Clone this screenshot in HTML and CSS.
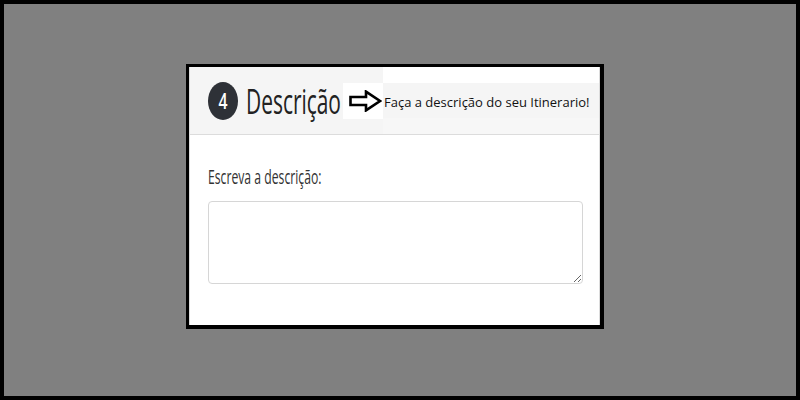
FILE: index.html
```html
<!DOCTYPE html>
<html lang="pt">
<head>
<meta charset="utf-8">
<title>Descrição</title>
<link rel="stylesheet" href="styles.css">
</head>
<body>
<div class="screen">
  <section class="card">
    <header class="card-head">
      <span class="badge"><span class="squeeze">4</span></span>
      <h2 class="title"><span class="squeeze">Descrição</span></h2>
      <span class="arrow-box">
        <svg width="33" height="22" viewBox="0 0 33 22" aria-hidden="true">
          <path d="M1.5 7 H17 V1.6 L31 11 L17 20.4 V15 H1.5 Z" fill="#fff" stroke="#000" stroke-width="2.6" stroke-linejoin="miter"/>
        </svg>
      </span>
      <div class="hint-wrap"><span class="hint">Faça a descrição do seu Itinerario!</span></div>
    </header>
    <div class="card-body">
      <label class="label" for="desc"><span class="squeeze">Escreva a descrição:</span></label>
      <div class="field">
        <textarea id="desc" class="textarea"></textarea>
      </div>
    </div>
  </section>
</div>
</body>
</html>
```
FILE: styles.css
```css
* { box-sizing: border-box; }
html, body { margin: 0; padding: 0; }
body {
  width: 800px;
  height: 400px;
  background: #000;
  font-family: "Open Sans", "Liberation Sans", sans-serif;
}
.screen {
  width: 800px;
  height: 400px;
  border: 4px solid #000;
  background: #808080;
  padding: 60px 0 0 182px;
  display: flex;
  align-items: flex-start;
}
.card {
  width: 418px;
  border-style: solid;
  border-color: #000;
  border-width: 3px 4px 4px 3px;
  background: #fff;
  display: flex;
  flex-direction: column;
}
.card-head {
  height: 68px;
  background: #f5f5f5;
  border-left: 1px solid #dcdcdc;
  border-right: 1px solid #dcdcdc;
  border-bottom: 1px solid #dcdcdc;
  display: flex;
  align-items: center;
  padding-left: 18px;
}
.squeeze {
  display: inline-block;
  white-space: nowrap;
  transform-origin: left center;
}
.badge {
  flex: none;
  width: 30px;
  height: 38px;
  border-radius: 50%;
  background: #2e3137;
  color: #fff;
  font-size: 21px;
  font-weight: 600;
  line-height: 38px;
  display: flex;
  justify-content: center;
  overflow: hidden;
}
.badge .squeeze {
  transform: scaleX(.75);
  transform-origin: center;
}
.title {
  flex: none;
  width: 94px;
  margin: 0 0 0 8px;
  font-size: 34px;
  font-weight: 400;
  line-height: 40px;
  color: #222;
}
.title .squeeze { transform: scaleX(.615); }
.arrow-box {
  flex: none;
  width: 40px;
  height: 36px;
  margin-left: 3px;
  background: #fff;
  display: flex;
  align-items: center;
  justify-content: flex-end;
  padding-right: 1px;
}
.hint-wrap {
  flex: 1;
  align-self: stretch;
  display: flex;
  align-items: center;
  padding-left: 1px;
  padding-top: 2px;
  background: linear-gradient(#fff 0 16px, #f5f5f5 16px 51px, #f7f7f7 51px);
}
.hint {
  font-size: 13px;
  color: #111;
  white-space: nowrap;
}
.card-body {
  border-left: 1px solid #dcdcdc;
  border-right: 1px solid #dcdcdc;
  padding: 30px 11px 41px 18px;
  display: flex;
  flex-direction: column;
  gap: 12px;
}
.label {
  height: 24px;
  font-size: 20px;
  line-height: 24px;
  color: #333;
}
.label .squeeze { transform: scaleX(.61); }
.field { display: flex; }
.textarea {
  width: 375px;
  height: 83px;
  border: 1px solid #d6d6d6;
  border-radius: 4px;
  background: #fff;
  resize: vertical;
  margin: 0;
  font: inherit;
}
```
